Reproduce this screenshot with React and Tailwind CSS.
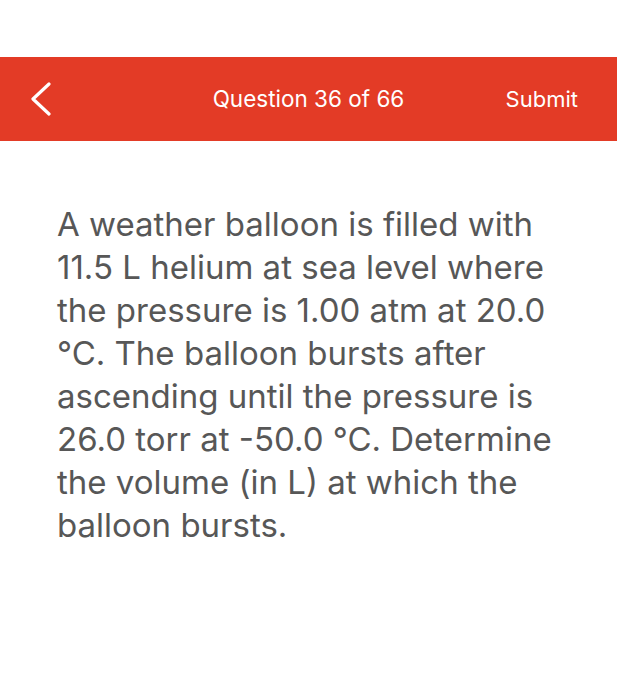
export default function App() {
  const lines = [
    "A weather balloon is filled with",
    "11.5 L helium at sea level where",
    "the pressure is 1.00 atm at 20.0",
    "°C. The balloon bursts after",
    "ascending until the pressure is",
    "26.0 torr at -50.0 °C. Determine",
    "the volume (in L) at which the",
    "balloon bursts.",
  ];

  return (
    <div
      className="w-[617px] h-[700px] bg-white"
      style={{ fontFamily: "Inter, 'Liberation Sans', sans-serif" }}
    >
      <div className="h-[57px]" />

      {/* ── Header bar ── */}
      <div className="relative flex h-[84px] items-center justify-between bg-[#e33b26] text-white">
        <button className="flex h-full items-center pl-[28px]">
          <svg width="24" height="34" viewBox="0 0 24 34" fill="none">
            <path
              d="M21 2 L5 17 L21 32"
              stroke="white"
              strokeWidth="3.2"
              strokeLinecap="round"
              strokeLinejoin="round"
            />
          </svg>
        </button>
        <div className="absolute left-0 right-0 text-center text-[22.5px] pointer-events-none">
          Question 36 of 66
        </div>
        <button className="pr-[39px] text-[22px]">Submit</button>
      </div>

      {/* ── Question body ── */}
      <div className="px-[57px] pt-[62px] text-[33px] leading-[43px] text-[#575757]">
        {lines.map((l) => (
          <div key={l} className="whitespace-nowrap">
            {l}
          </div>
        ))}
      </div>
    </div>
  );
}
